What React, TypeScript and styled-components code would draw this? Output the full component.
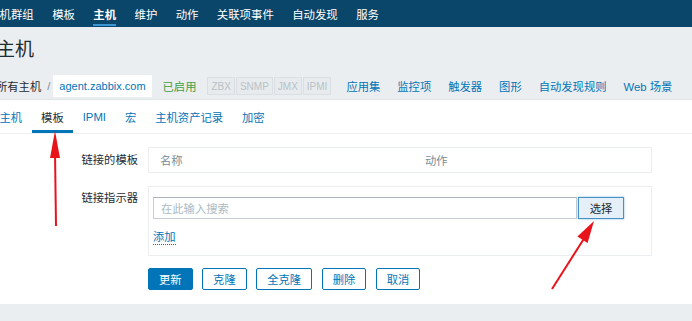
import React from "react";
import styled, { createGlobalStyle } from "styled-components";

const GlobalStyle = createGlobalStyle`
  html, body {
    margin: 0;
    padding: 0;
    background: #ffffff;
  }
  body {
    font-family: "Liberation Sans", "Noto Sans CJK SC", sans-serif;
    font-size: 11.3px;
    color: #1f2c33;
  }
`;

const Page = styled.div`
  position: relative;
  width: 692px;
  height: 321px;
  overflow: hidden;
  background: #ffffff;
  display: flex;
  flex-direction: column;
`;

const TopNav = styled.nav`
  height: 27px;
  background: #0a466a;
  display: flex;
  align-items: stretch;
  margin-left: -21px;
  flex-shrink: 0;
`;

const NavItem = styled.a<{ $active?: boolean }>`
  display: flex;
  align-items: center;
  padding: 0 9.2px;
  color: #ffffff;
  font-size: 11.4px;
  font-weight: ${(p) => (p.$active ? "bold" : "normal")};
  text-decoration: none;
  white-space: nowrap;
  box-sizing: border-box;
  position: relative;
  &::after {
    content: "";
    display: ${(p) => (p.$active ? "block" : "none")};
    position: absolute;
    left: 9px;
    right: 9px;
    bottom: 1px;
    height: 2px;
    background: #3b97d3;
  }
`;

const Header = styled.header`
  background: #ebeef0;
  padding-top: 12px;
  border-bottom: 1px solid #e0e5e8;
  flex-shrink: 0;
`;

const Title = styled.h1`
  margin: 0 0 14px -4px;
  font-size: 19px;
  line-height: 22px;
  font-weight: normal;
  color: #1f2c33;
`;

const Breadcrumbs = styled.div`
  display: flex;
  align-items: center;
  height: 22px;
  padding-bottom: 2px;
  margin-left: -4px;
  white-space: nowrap;
  & > * {
    flex-shrink: 0;
  }
`;

const Crumb = styled.span`
  color: #1f2c33;
`;

const Slash = styled.span`
  color: #768d99;
  margin: 0 3px 0 6px;
`;

const CurrentHost = styled.a`
  display: flex;
  align-items: center;
  height: 22px;
  background: #ffffff;
  color: #0275b8;
  padding: 0 6px;
  font-size: 11px;
  margin-right: 11px;
`;

const Enabled = styled.span`
  color: #429e47;
  margin-right: 11px;
`;

const StatusGroup = styled.span`
  display: flex;
  gap: 1px;
  margin-right: 15px;
`;

const StatusBox = styled.span`
  display: flex;
  align-items: center;
  height: 16px;
  padding: 0 3px;
  border: 1px solid #d9dfe2;
  background: #e8ebed;
  color: #b6c2c8;
  font-size: 10px;
`;

const HeaderLink = styled.a`
  color: #0275b8;
  margin-right: 17px;
  text-decoration: none;
`;

const Tabs = styled.div`
  display: flex;
  height: 33px;
  border-bottom: 1px solid #eef1f2;
  margin-left: -10px;
  flex-shrink: 0;
`;

const Tab = styled.a<{ $active?: boolean }>`
  display: flex;
  align-items: center;
  box-sizing: border-box;
  padding: 3px 9.5px 0;
  white-space: nowrap;
  color: ${(p) => (p.$active ? "#1f2c33" : "#0275b8")};
  border-bottom: 3px solid ${(p) => (p.$active ? "#0275b8" : "transparent")};
`;

const Form = styled.div`
  display: grid;
  grid-template-columns: 138px 504px;
  column-gap: 10px;
  row-gap: 13px;
  padding-top: 13px;
  align-items: start;
`;

const Label = styled.label<{ $top: number }>`
  text-align: right;
  line-height: 14px;
  padding-top: ${(p) => p.$top}px;
  color: #1f2c33;
  white-space: nowrap;
`;

const Box = styled.div`
  border: 1px solid #ebeef0;
  box-sizing: border-box;
`;

const TableHead = styled.div`
  display: grid;
  grid-template-columns: 265px 1fr;
  height: 24px;
  align-items: center;
  padding-left: 11px;
  color: #768d99;
`;

const MultiBox = styled(Box)`
  height: 70px;
  padding: 10px 0 0 4px;
`;

const SelectRow = styled.div`
  display: flex;
  align-items: center;
`;

const SearchInput = styled.div`
  width: 424px;
  height: 22px;
  box-sizing: border-box;
  border: 1px solid #c5d0d5;
  border-top-color: #a9b5bb;
  display: flex;
  align-items: center;
  padding-left: 7px;
  color: #acbbc2;
`;

const SelectButton = styled.button`
  margin-left: 1px;
  width: 46px;
  height: 22px;
  box-sizing: border-box;
  border: 1px solid #4a90c8;
  background: #e4eff8;
  box-shadow: 0 0 2px rgba(2, 117, 184, 0.5);
  color: #1f2c33;
  font-family: inherit;
  font-size: 11.3px;
  padding: 0;
`;

const AddLink = styled.a`
  display: inline-block;
  margin-top: 12px;
  color: #0275b8;
  border-bottom: 1px dotted #0275b8;
  line-height: 13px;
`;

const Buttons = styled.div`
  display: flex;
  gap: 9.5px;
  padding: 12px 0 0 148px;
`;

const Button = styled.button<{ $primary?: boolean }>`
  height: 22px;
  box-sizing: border-box;
  padding: 0 10px;
  border: 1px solid #0275b8;
  border-radius: 2px;
  background: ${(p) => (p.$primary ? "#0275b8" : "#ffffff")};
  color: ${(p) => (p.$primary ? "#ffffff" : "#0275b8")};
  font-family: inherit;
  font-size: 11.3px;
`;

const Footer = styled.div`
  margin-top: auto;
  height: 17px;
  background: #ebeef0;
`;

const Annotations = styled.svg`
  position: absolute;
  left: 0;
  top: 0;
  pointer-events: none;
`;

const navItems = ["主机群组", "模板", "主机", "维护", "动作", "关联项事件", "自动发现", "服务"];
const statuses = ["ZBX", "SNMP", "JMX", "IPMI"];
const hostLinks = ["应用集", "监控项", "触发器", "图形", "自动发现规则", "Web 场景"];
const tabs = ["主机", "模板", "IPMI", "宏", "主机资产记录", "加密"];
const actions = ["更新", "克隆", "全克隆", "删除", "取消"];

export default function App() {
  return (
    <>
      <GlobalStyle />
      <Page>
        <TopNav>
          {navItems.map((item) => (
            <NavItem key={item} $active={item === "主机"}>
              {item}
            </NavItem>
          ))}
        </TopNav>
        <Header>
          <Title>主机</Title>
          <Breadcrumbs>
            <Crumb>所有主机</Crumb>
            <Slash>/</Slash>
            <CurrentHost>agent.zabbix.com</CurrentHost>
            <Enabled>已启用</Enabled>
            <StatusGroup>
              {statuses.map((s) => (
                <StatusBox key={s}>{s}</StatusBox>
              ))}
            </StatusGroup>
            {hostLinks.map((l) => (
              <HeaderLink key={l}>{l}</HeaderLink>
            ))}
          </Breadcrumbs>
        </Header>
        <Tabs>
          {tabs.map((t) => (
            <Tab key={t} $active={t === "模板"}>
              {t}
            </Tab>
          ))}
        </Tabs>
        <Form>
          <Label $top={6}>链接的模板</Label>
          <Box>
            <TableHead>
              <span>名称</span>
              <span>动作</span>
            </TableHead>
          </Box>
          <Label $top={5}>链接指示器</Label>
          <MultiBox>
            <SelectRow>
              <SearchInput>在此输入搜索</SearchInput>
              <SelectButton>选择</SelectButton>
            </SelectRow>
            <AddLink>添加</AddLink>
          </MultiBox>
        </Form>
        <Buttons>
          {actions.map((a) => (
            <Button key={a} $primary={a === "更新"}>
              {a}
            </Button>
          ))}
        </Buttons>
        <Footer />
        <Annotations width={692} height={321}>
          <line x1={56} y1={226} x2={55} y2={152} stroke="#e8141b" strokeWidth={2} />
          <polygon points="55,131 50,158 60,158" fill="#e8141b" />
          <line x1={552} y1={289} x2={585} y2={237} stroke="#e8141b" strokeWidth={2} />
          <polygon points="594,221 587.6,242.9 577.4,236.6" fill="#e8141b" />
        </Annotations>
      </Page>
    </>
  );
}
